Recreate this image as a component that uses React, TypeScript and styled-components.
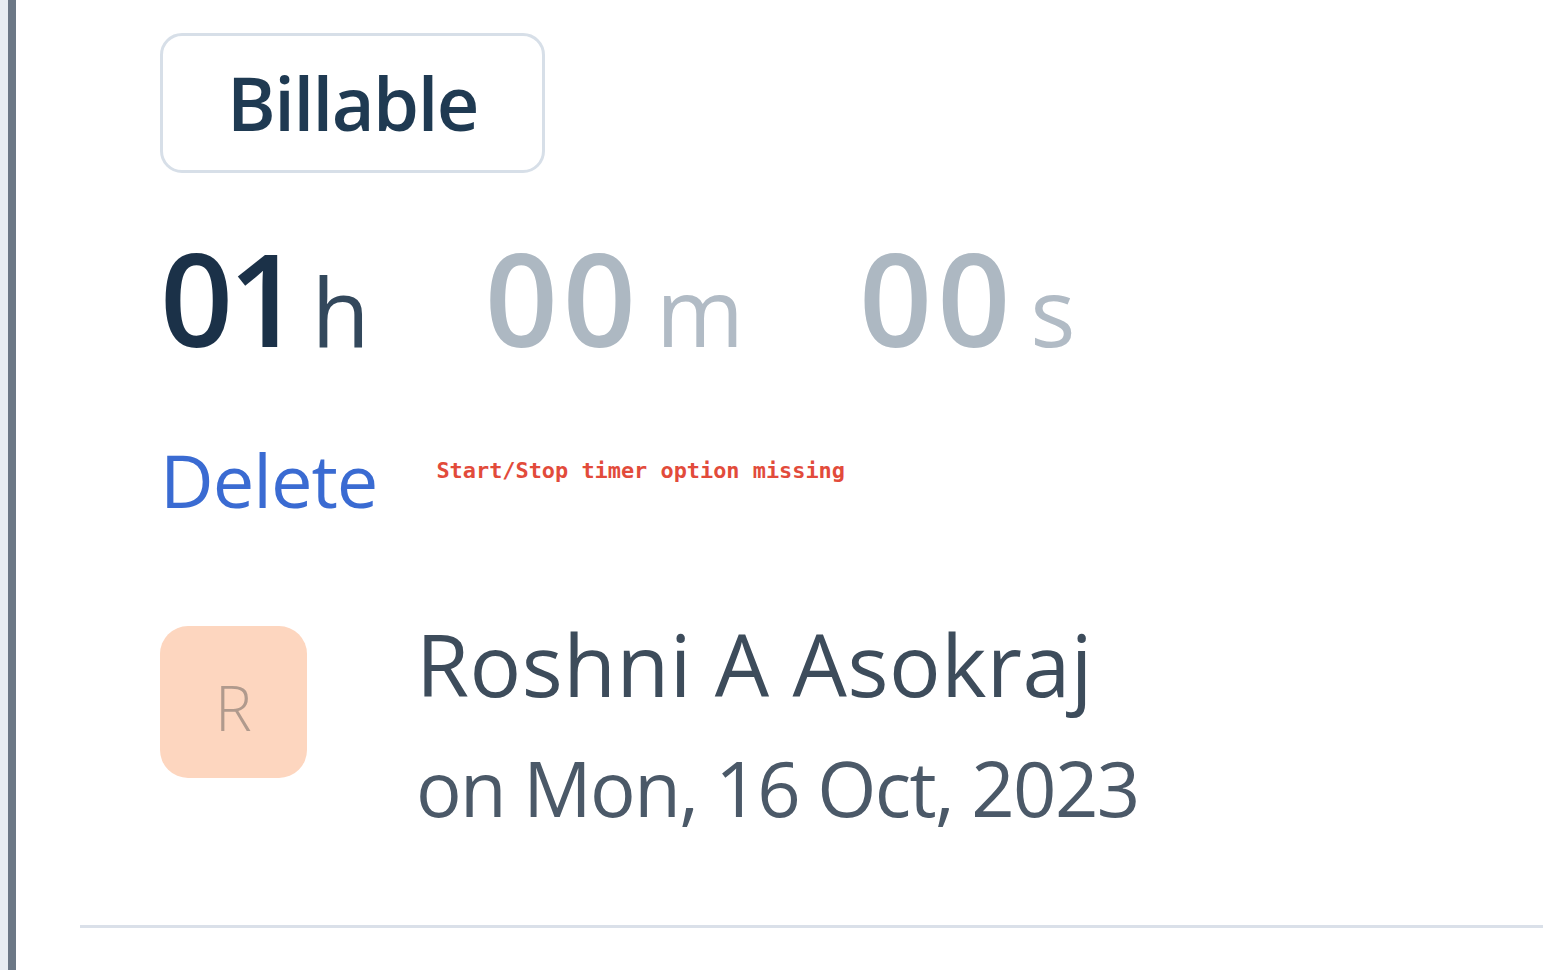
import styled, { createGlobalStyle } from "styled-components";

const GlobalStyle = createGlobalStyle`
  html, body {
    margin: 0;
    padding: 0;
    background: #ffffff;
  }
  body {
    font-family: "Open Sans", "Noto Sans", Arial, sans-serif;
  }
`;

const Page = styled.div`
  display: flex;
  min-height: 970px;
  width: 1565px;
  overflow: hidden;
`;

const Gutter = styled.div`
  width: 8px;
  background: #e8edf2;
`;

const Rule = styled.div`
  width: 8px;
  background: #6c7886;
`;

const Main = styled.div`
  flex: 1;
  padding: 33px 22px 0 64px;
  display: flex;
  flex-direction: column;
`;

const Content = styled.div`
  display: flex;
  flex-direction: column;
  align-items: flex-start;
  padding-left: 80px;
`;

const Tag = styled.div`
  box-sizing: border-box;
  width: 385px;
  height: 140px;
  border: 3px solid #d7dfe8;
  border-radius: 22px;
  display: flex;
  align-items: center;
  justify-content: center;
  font-size: 74px;
  font-weight: 600;
  letter-spacing: -1.5px;
  color: #1f3a52;
  line-height: 1;
`;

const Timer = styled.div`
  display: flex;
  align-items: baseline;
  gap: 115px;
  margin-top: 61px;
  line-height: 1;
`;

const Segment = styled.div`
  display: flex;
  align-items: baseline;
  gap: 15px;
`;

const Digits = styled.span<{ $active?: boolean }>`
  font-size: 128px;
  font-weight: 600;
  letter-spacing: ${(p) => (p.$active ? "-5px" : "5px")};
  color: ${(p) => (p.$active ? "#1b3148" : "#adb8c2")};
`;

const Unit = styled.span<{ $active?: boolean }>`
  font-size: 95px;
  font-weight: 400;
  color: ${(p) => (p.$active ? "#33485c" : "#b1bbc5")};
`;

const ActionRow = styled.div`
  display: flex;
  align-items: flex-start;
  gap: 59px;
  margin-top: 81px;
`;

const DeleteLink = styled.a`
  font-size: 74px;
  font-weight: 500;
  line-height: 1;
  letter-spacing: -1px;
  color: #3a6bd2;
  cursor: pointer;
`;

const Note = styled.span`
  margin-top: 17px;
  font-family: "DejaVu Sans Mono", "Liberation Mono", monospace;
  font-weight: 700;
  font-size: 21.9px;
  line-height: 1;
  color: #e24b3b;
`;

const Author = styled.div`
  display: flex;
  align-items: flex-start;
  gap: 109px;
  margin-top: 104px;
`;

const Avatar = styled.div`
  width: 147px;
  height: 152px;
  margin-top: 5px;
  border-radius: 28px;
  background: #fdd6bf;
  color: #b09a8d;
  font-size: 62px;
  font-weight: 300;
  display: flex;
  align-items: center;
  justify-content: center;
  padding-top: 10px;
  box-sizing: border-box;
`;

const Info = styled.div`
  display: flex;
  flex-direction: column;
`;

const Name = styled.div`
  font-size: 86px;
  line-height: 1;
  font-weight: 500;
  letter-spacing: 0.5px;
  color: #3d4c5b;
`;

const Meta = styled.div`
  margin-top: 43px;
  font-size: 76px;
  line-height: 1;
  letter-spacing: -1.6px;
  color: #4b5968;
`;

const Divider = styled.hr`
  margin: 99px 0 0;
  border: none;
  height: 3px;
  background: #dae0e9;
`;

export default function App() {
  return (
    <>
      <GlobalStyle />
      <Page>
        <Gutter />
        <Rule />
        <Main>
          <Content>
            <Tag>Billable</Tag>
            <Timer>
              <Segment>
                <Digits $active>01</Digits>
                <Unit $active>h</Unit>
              </Segment>
              <Segment>
                <Digits>00</Digits>
                <Unit>m</Unit>
              </Segment>
              <Segment>
                <Digits>00</Digits>
                <Unit>s</Unit>
              </Segment>
            </Timer>
            <ActionRow>
              <DeleteLink>Delete</DeleteLink>
              <Note>Start/Stop timer option missing</Note>
            </ActionRow>
            <Author>
              <Avatar>R</Avatar>
              <Info>
                <Name>Roshni A Asokraj</Name>
                <Meta>on Mon, 16 Oct, 2023</Meta>
              </Info>
            </Author>
          </Content>
          <Divider />
        </Main>
      </Page>
    </>
  );
}
